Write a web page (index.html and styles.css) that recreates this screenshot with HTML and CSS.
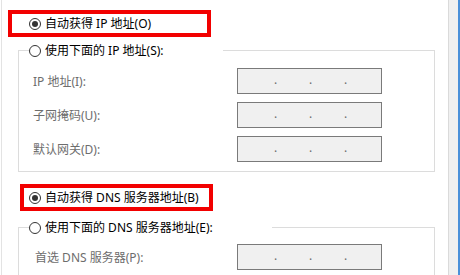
FILE: index.html
```html
<!DOCTYPE html>
<html lang="zh-CN">
<head>
<meta charset="utf-8">
<link rel="stylesheet" href="styles.css">
</head>
<body>
<div class="window">
  <div class="content">
    <div class="opt opt-ip"><span class="radio checked"></span><span class="txt">自动获得 IP 地址(O)</span></div>
    <fieldset class="group g1">
      <legend><span class="radio"></span><span class="txt">使用下面的 IP 地址(S):</span></legend>
      <div class="grid">
        <span class="lbl">IP 地址(I):</span>
        <div class="ip"><span>.</span><span>.</span><span>.</span></div>
        <span class="lbl">子网掩码(U):</span>
        <div class="ip"><span>.</span><span>.</span><span>.</span></div>
        <span class="lbl">默认网关(D):</span>
        <div class="ip"><span>.</span><span>.</span><span>.</span></div>
      </div>
    </fieldset>
    <div class="opt opt-dns"><span class="radio checked"></span><span class="txt">自动获得 DNS 服务器地址(B)</span></div>
    <fieldset class="group g2">
      <legend><span class="radio"></span><span class="txt">使用下面的 DNS 服务器地址(E):</span></legend>
      <div class="grid">
        <span class="lbl">首选 DNS 服务器(P):</span>
        <div class="ip"><span>.</span><span>.</span><span>.</span></div>
      </div>
    </fieldset>
  </div>
  <div class="side"></div>
</div>
</body>
</html>
```
FILE: styles.css
```css
html, body {
  margin: 0;
  padding: 0;
}
body {
  width: 460px;
  height: 275px;
  overflow: hidden;
  background: #ffffff;
  color: #000000;
  font-family: "Noto Sans", "Noto Sans CJK SC", sans-serif;
  font-size: 12px;
  line-height: 17px;
}
.window {
  display: flex;
  height: 275px;
  overflow: hidden;
}
.content {
  box-sizing: border-box;
  width: 447px;
  margin-left: 1px;
  border-left: 1px solid #e3e3e3;
  padding-top: 10px;
}
.side {
  box-sizing: border-box;
  width: 12px;
  background: #f0f0f0;
  border-left: 1px solid #dadada;
  border-right: 2px solid #4a90d9;
}
.opt {
  box-sizing: border-box;
  display: flex;
  align-items: center;
  height: 27px;
  border: 4px solid #f20000;
}
.opt-ip {
  margin-left: 6px;
  width: 203px;
  padding-left: 17px;
}
.opt-dns {
  margin-left: 18px;
  margin-top: 12px;
  width: 193px;
  padding-left: 5px;
}
.radio {
  box-sizing: border-box;
  flex: none;
  width: 12px;
  height: 12px;
  border: 1px solid #333333;
  border-radius: 50%;
  margin-right: 4px;
  display: flex;
  align-items: center;
  justify-content: center;
  background: #ffffff;
}
.radio.checked::after {
  content: "";
  width: 6px;
  height: 6px;
  border-radius: 50%;
  background: #333333;
}
.txt {
  white-space: nowrap;
}
.group {
  box-sizing: border-box;
  width: 417px;
  min-width: 0;
  margin: 5px 0 0 16px;
  padding: 9px 0 9px 0;
  border: 1px solid #dcdcdc;
}
.g2 {
  margin-top: 8px;
  padding-top: 8px;
}
.group legend {
  display: flex;
  align-items: center;
  height: 17px;
  margin-left: 10px;
  padding: 0 59px 0 0;
}
.grid {
  display: grid;
  grid-template-columns: 204px 145px;
  row-gap: 8px;
  align-items: center;
  margin-left: 14px;
}
.g2 .grid {
  margin-left: 16px;
  grid-template-columns: 202px 145px;
}
.lbl {
  color: #6d6d6d;
  white-space: nowrap;
}
.ip {
  box-sizing: border-box;
  height: 26px;
  border: 1px solid #7a7a7a;
  background: #f0f0f0;
  display: flex;
  align-items: center;
  padding-left: 20px;
  color: #6d6d6d;
}
.ip span {
  width: 35px;
  text-align: center;
  line-height: 12px;
  height: 12px;
  margin-top: -2px;
}
```
